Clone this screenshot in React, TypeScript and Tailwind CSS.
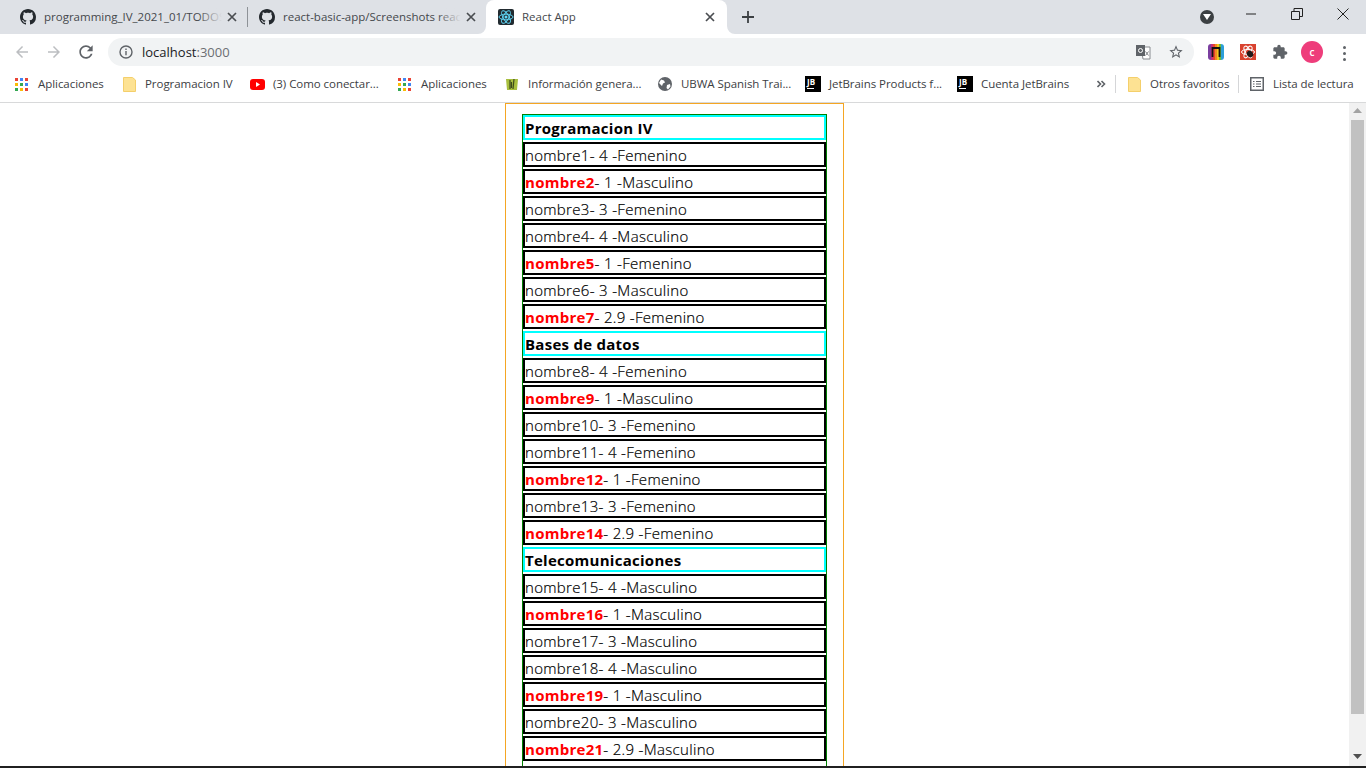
const FONT = "font-['Open_Sans',sans-serif]";

const GITHUB =
  "M8 0C3.58 0 0 3.58 0 8c0 3.54 2.29 6.53 5.47 7.59.4.07.55-.17.55-.38 0-.19-.01-.82-.01-1.49-2.01.37-2.53-.49-2.69-.94-.09-.23-.48-.94-.82-1.13-.28-.15-.68-.52-.01-.53.63-.01 1.08.58 1.23.82.72 1.21 1.87.87 2.33.66.07-.52.28-.87.51-1.07-1.78-.2-3.64-.89-3.64-3.95 0-.87.31-1.59.82-2.15-.08-.2-.36-1.02.08-2.12 0 0 .67-.21 2.2.82.64-.18 1.32-.27 2-.27.68 0 1.36.09 2 .27 1.53-1.04 2.2-.82 2.2-.82.44 1.1.16 1.92.08 2.12.51.56.82 1.27.82 2.15 0 3.07-1.87 3.75-3.65 3.95.29.25.54.73.54 1.48 0 1.07-.01 1.93-.01 2.2 0 .21.15.46.55.38A8.013 8.013 0 0016 8c0-4.42-3.58-8-8-8z";

function GithubIcon() {
  return (
    <svg width="16" height="16" viewBox="0 0 16 16" className="shrink-0">
      <path d={GITHUB} fill="#24292e" />
    </svg>
  );
}

function CloseIcon() {
  return (
    <svg width="10" height="10" viewBox="0 0 10 10" className="shrink-0">
      <path d="M1 1l8 8M9 1l-8 8" stroke="#4a4d51" strokeWidth="1.7" />
    </svg>
  );
}

function ReactIcon() {
  return (
    <svg width="16" height="16" viewBox="0 0 16 16" className="shrink-0">
      <rect width="16" height="16" rx="2" fill="#222b30" />
      <g fill="none" stroke="#61dafb" strokeWidth="0.9">
        <ellipse cx="8" cy="8" rx="7" ry="2.8" />
        <ellipse cx="8" cy="8" rx="7" ry="2.8" transform="rotate(60 8 8)" />
        <ellipse cx="8" cy="8" rx="7" ry="2.8" transform="rotate(120 8 8)" />
      </g>
      <circle cx="8" cy="8" r="1.5" fill="#61dafb" />
    </svg>
  );
}

function Tab({ title, width, active }: { title: string; width: string; active?: boolean }) {
  if (active) {
    return (
      <div className={`relative flex h-[34px] shrink-0 items-center rounded-t-lg bg-white pl-[12px] pr-[12px] ${width}`}>
        <svg width="8" height="8" viewBox="0 0 8 8" className="absolute bottom-0 left-[-8px]">
          <path d="M8 0v8H0a8 8 0 008-8z" fill="#fff" />
        </svg>
        <svg width="8" height="8" viewBox="0 0 8 8" className="absolute bottom-0 right-[-8px]">
          <path d="M0 0v8h8a8 8 0 01-8-8z" fill="#fff" />
        </svg>
        <ReactIcon />
        <span className="ml-2 flex-1 text-[11.5px] text-[#45484c]">{title}</span>
        <CloseIcon />
      </div>
    );
  }
  return (
    <div className={`flex h-[34px] shrink-0 items-center ${width}`}>
      <GithubIcon />
      <div className="relative ml-2 mr-[5px] flex-1 overflow-hidden">
        <span className="block whitespace-nowrap text-[11.5px] text-[#45484c]">{title}</span>
        <div className="absolute inset-y-0 right-0 w-6 bg-linear-to-r from-transparent to-[#dee1e6]" />
      </div>
      <CloseIcon />
    </div>
  );
}

function TabStrip() {
  return (
    <div className="flex h-[34px] shrink-0 items-center bg-[#dee1e6] pl-5">
      <div className="flex w-[227px] shrink-0 items-center pr-[10px]">
        <Tab title="programming_IV_2021_01/TODOS" width="w-[217px]" />
      </div>
      <div className="h-5 w-px shrink-0 bg-[#8e9297]" />
      <div className="ml-[11px] flex w-[227px] shrink-0 items-center">
        <Tab title="react-basic-app/Screenshots react" width="w-[217px]" />
      </div>
      <Tab title="React App" width="w-[241px]" active />
      <svg width="14" height="14" viewBox="0 0 14 14" className="ml-[14px] shrink-0">
        <path d="M7 1v12M1 7h12" stroke="#3c4043" strokeWidth="1.8" />
      </svg>
      <div className="flex-1" />
      <div className="flex h-[14px] w-[14px] shrink-0 items-center justify-center rounded-full bg-[#3c4043]">
        <svg width="8" height="6" viewBox="0 0 8 6">
          <path d="M0 0h8L4 6z" fill="#fff" />
        </svg>
      </div>
      <div className="flex shrink-0 items-start gap-[34px] self-start pl-[31px] pr-[17px] pt-[8px]">
        <svg width="12" height="12" viewBox="0 0 12 12">
          <path d="M1 6h10" stroke="#222" strokeWidth="1" />
        </svg>
        <svg width="12" height="12" viewBox="0 0 12 12">
          <path d="M.5 3.5h8v8h-8zM3 3.5V.5h8.500v8h-3" fill="none" stroke="#222" strokeWidth="1" />
        </svg>
        <svg width="12" height="12" viewBox="0 0 12 12">
          <path d="M.5.500l11 11M11.500.500l-11 11" stroke="#222" strokeWidth="1" />
        </svg>
      </div>
    </div>
  );
}

function AddressBar() {
  return (
    <div className="flex h-[32px] shrink-0 items-start bg-white pl-[13px] pt-[4px]">
      <svg width="18" height="18" viewBox="0 0 24 24" className="mt-[5px] shrink-0">
        <path d="M20 11H7.830l5.590-5.590L12 4l-8 8 8 8 1.410-1.410L7.830 13H20v-2z" fill="#bcbec1" />
      </svg>
      <svg width="18" height="18" viewBox="0 0 24 24" className="ml-[14px] mt-[5px] shrink-0 rotate-180">
        <path d="M20 11H7.830l5.590-5.590L12 4l-8 8 8 8 1.410-1.410L7.830 13H20v-2z" fill="#bcbec1" />
      </svg>
      <svg width="20" height="20" viewBox="0 0 24 24" className="ml-[13px] mt-[4px] shrink-0">
        <path
          d="M17.650 6.350C16.200 4.900 14.210 4 12 4c-4.420 0-7.990 3.580-7.990 8s3.570 8 7.990 8c3.730 0 6.840-2.550 7.730-6h-2.080c-.82 2.330-3.040 4-5.650 4-3.310 0-6-2.690-6-6s2.690-6 6-6c1.660 0 3.140.69 4.220 1.780L13 11h7V4l-2.350 2.350z"
          fill="#5f6368"
        />
      </svg>
      <div className="ml-[12px] flex h-[28px] w-[1086px] shrink-0 items-center rounded-full bg-[#f1f3f4] pl-[11px] pr-[10px]">
        <svg width="14" height="14" viewBox="0 0 14 14" className="shrink-0">
          <circle cx="7" cy="7" r="6" fill="none" stroke="#5f6368" strokeWidth="1.400" />
          <path d="M7 6v4.200M7 3.500v1.400" stroke="#5f6368" strokeWidth="1.400" />
        </svg>
        <span className="ml-[9px] pt-[1px] text-[13px] text-[#202124]">
          localhost<span className="text-[#6b6e72]">:3000</span>
        </span>
        <div className="flex-1" />
        <svg width="16" height="16" viewBox="0 0 16 16" className="shrink-0">
          <path d="M6 3h9v12H8z" fill="#fff" stroke="#888b8f" strokeWidth="1" />
          <rect x="1" y="1" width="9" height="11" fill="#5f6368" />
          <circle cx="5.500" cy="6.500" r="2" fill="none" stroke="#fff" strokeWidth="1" />
          <path d="M10.500 7.500l3 4M13.500 7.500l-3 4" stroke="#7d8084" strokeWidth="1" />
        </svg>
        <svg width="16" height="16" viewBox="0 0 24 24" className="ml-[17px] shrink-0">
          <path
            d="M22 9.240l-7.190-.62L12 2 9.190 8.630 2 9.240l5.460 4.730L5.820 21 12 17.270 18.180 21l-1.630-7.030L22 9.240zM12 15.400l-3.760 2.270 1-4.280-3.320-2.880 4.380-.38L12 6.100l1.710 4.040 4.380.38-3.320 2.880 1 4.280L12 15.400z"
            fill="#5f6368"
          />
        </svg>
      </div>
      <div className="ml-[14px] h-4 w-4 mt-[6px] shrink-0 overflow-hidden rounded-[3px]">
        <svg width="16" height="16" viewBox="0 0 16 16">
          <rect x="0" width="3" height="16" fill="#7b3fa0" />
          <rect x="3" width="2" height="16" fill="#c2307a" />
          <rect x="5" width="2" height="16" fill="#e8432e" />
          <rect x="7" width="2" height="16" fill="#f08a24" />
          <rect x="9" width="2" height="16" fill="#f6c61c" />
          <rect x="11" width="2" height="16" fill="#6cbb3c" />
          <rect x="13" width="3" height="16" fill="#2c9fd8" />
          <path d="M4.500 13V4h7v9" fill="none" stroke="#111" strokeWidth="1.800" />
        </svg>
      </div>
      <svg width="16" height="16" viewBox="0 0 16 16" className="ml-4 mt-[6px] shrink-0">
        <rect width="16" height="16" fill="#d9422f" />
        <g fill="none" stroke="#fff" strokeWidth="1">
          <ellipse cx="8" cy="8" rx="6.500" ry="2.600" />
          <ellipse cx="8" cy="8" rx="6.500" ry="2.600" transform="rotate(60 8 8)" />
          <ellipse cx="8" cy="8" rx="6.500" ry="2.600" transform="rotate(120 8 8)" />
        </g>
        <ellipse cx="10" cy="10" rx="3" ry="3.500" fill="#231a1a" transform="rotate(-35 10 10)" />
      </svg>
      <svg width="16" height="16" viewBox="0 0 24 24" className="ml-4 mt-[6px] shrink-0">
        <path
          d="M20.500 11H19V7c0-1.100-.9-2-2-2h-4V3.500C13 2.120 11.880 1 10.500 1S8 2.120 8 3.500V5H4c-1.100 0-1.990.9-1.990 2v3.800H3.500c1.490 0 2.700 1.210 2.700 2.700s-1.210 2.700-2.700 2.700H2V20c0 1.100.9 2 2 2h3.800v-1.500c0-1.490 1.210-2.700 2.700-2.700 1.490 0 2.700 1.210 2.700 2.700V22H17c1.100 0 2-.9 2-2v-4h1.500c1.380 0 2.500-1.120 2.500-2.500S21.880 11 20.500 11z"
          fill="#5f6368"
        />
      </svg>
      <div className="ml-[13px] mt-[3px] flex h-[22px] w-[22px] shrink-0 items-center justify-center rounded-full bg-[#ee3d7b] text-[10px] font-semibold text-white">
        c
      </div>
      <div className="ml-[20px] mt-[8px] flex shrink-0 flex-col gap-[3px]">
        <div className="h-[3px] w-[3px] rounded-full bg-[#5f6368]" />
        <div className="h-[3px] w-[3px] rounded-full bg-[#5f6368]" />
        <div className="h-[3px] w-[3px] rounded-full bg-[#5f6368]" />
      </div>
    </div>
  );
}

function AppsIcon() {
  const colors = ["#ea4335", "#4285f4", "#ea4335", "#fbbc05", "#34a853", "#4285f4", "#34a853", "#fbbc05", "#ea4335"];
  return (
    <div className="grid w-[13px] shrink-0 grid-cols-3 gap-[2px]">
      {colors.map((c, i) => (
        <div key={i} className="h-[3px] w-[3px]" style={{ backgroundColor: c }} />
      ))}
    </div>
  );
}

function FolderIcon() {
  return (
    <svg width="13" height="15" viewBox="0 0 13 15" className="shrink-0">
      <path d="M.5.500h9l3 2.500v11.500H.5z" fill="#fde293" stroke="#f4cf6b" strokeWidth="1" />
    </svg>
  );
}

function YoutubeIcon() {
  return (
    <svg width="15" height="11" viewBox="0 0 15 11" className="shrink-0">
      <rect width="15" height="11" rx="3" fill="#f00" />
      <path d="M6 3l4 2.500L6 8z" fill="#fff" />
    </svg>
  );
}

function LeafIcon() {
  return (
    <svg width="12" height="13" viewBox="0 0 12 13" className="shrink-0">
      <path d="M0 1h12l-1 11H1z" fill="#a8bf3f" />
      <path d="M4 2v9M8 1L7 11M5.500 4v6" stroke="#3d4a1c" strokeWidth="1.200" />
    </svg>
  );
}

function GlobeIcon() {
  return (
    <svg width="14" height="14" viewBox="0 0 14 14" className="shrink-0">
      <circle cx="7" cy="7" r="7" fill="#5f6368" />
      <path d="M3 2.500l3 1 1 2-2 1-1 2.500-3-3zM9 8l3-1 .5 2.500L10 12.500 8.500 11z" fill="#fff" />
    </svg>
  );
}

function JbIcon() {
  return (
    <div className="flex h-4 w-4 shrink-0 flex-col bg-black pl-[2px] pt-[1px]">
      <span className="text-[8px] font-bold leading-[9px] text-white">JB</span>
      <div className="mt-[2px] h-px w-[7px] bg-white" />
    </div>
  );
}

function ListIcon() {
  return (
    <svg width="14" height="14" viewBox="0 0 14 14" className="shrink-0">
      <rect x=".75" y=".75" width="12.500" height="12.500" fill="none" stroke="#5f6368" strokeWidth="1.500" />
      <path d="M3 4.500h1.500M6 4.500h5M3 7h1.500M6 7h5M3 9.500h1.500M6 9.500h5" stroke="#5f6368" strokeWidth="1.200" />
    </svg>
  );
}

function Bookmark({ icon, label, width, gap }: { icon: React.ReactNode; label: string; width: string; gap: string }) {
  return (
    <div className={`flex shrink-0 items-center whitespace-nowrap ${width}`}>
      {icon}
      <span className={`text-[11.5px] tracking-[-0.05px] text-[#3c4043] ${gap}`}>{label}</span>
    </div>
  );
}

function BookmarksBar() {
  return (
    <div className="flex h-[37px] shrink-0 items-center border-b border-[#d8d9da] bg-white pl-[15px]">
      <Bookmark icon={<AppsIcon />} label="Aplicaciones" width="w-[108px]" gap="ml-[10px]" />
      <Bookmark icon={<FolderIcon />} label="Programacion IV" width="w-[127px]" gap="ml-[9px]" />
      <Bookmark icon={<YoutubeIcon />} label="(3) Como conectar..." width="w-[148px]" gap="ml-[8px]" />
      <Bookmark icon={<AppsIcon />} label="Aplicaciones" width="w-[108px]" gap="ml-[10px]" />
      <Bookmark icon={<LeafIcon />} label="Información genera..." width="w-[152px]" gap="ml-[10px]" />
      <Bookmark icon={<GlobeIcon />} label="UBWA Spanish Trai..." width="w-[147px]" gap="ml-[9px]" />
      <Bookmark icon={<JbIcon />} label="JetBrains Products f..." width="w-[152px]" gap="ml-[8px]" />
      <Bookmark icon={<JbIcon />} label="Cuenta JetBrains" width="w-[140px]" gap="ml-[8px]" />
      <svg width="18" height="10" viewBox="0 0 18 10" className="shrink-0">
        <path d="M.5 2l3 3-3 3M4.500 2l3 3-3 3" fill="none" stroke="#5f6368" strokeWidth="1.600" />
      </svg>
      <div className="h-[18px] w-px shrink-0 bg-[#d5d6d8]" />
      <div className="ml-[12px] w-[110px] shrink-0">
        <Bookmark icon={<FolderIcon />} label="Otros favoritos" width="w-[110px]" gap="ml-[9px]" />
      </div>
      <div className="h-[18px] w-px shrink-0 bg-[#d5d6d8]" />
      <div className="ml-[11px]">
        <Bookmark icon={<ListIcon />} label="Lista de lectura" width="w-[104px]" gap="ml-[9px]" />
      </div>
    </div>
  );
}

type Student = { name: string; grade: number; sex: string };

const make = (from: number, sexes: string[]): Student[] =>
  [4, 1, 3, 4, 1, 3, 2.9].map((grade, i) => ({ name: `nombre${from + i}`, grade, sex: sexes[i] }));

const F = "Femenino";
const M = "Masculino";

const groups = [
  { title: "Programacion IV", students: make(1, [F, M, F, M, F, M, F]) },
  { title: "Bases de datos", students: make(8, [F, M, F, F, F, F, F]) },
  { title: "Telecomunicaciones", students: make(15, [M, M, M, M, M, M, M]) },
];

function Page() {
  return (
    <div className="mx-auto w-[339px] border border-b-0 border-[#f5a623] px-4 pt-[10px]">
      <div className="border border-b-0 border-[#008000] pb-10">
        {groups.map((g) => (
          <div key={g.title}>
            <div className="mb-[2px] h-[25px] whitespace-nowrap border-2 border-[#00ffff] pt-[1px] text-[15px] font-bold leading-[21px] tracking-[0.27px] text-black">
              {g.title}
            </div>
            {g.students.map((s) => (
              <div
                key={s.name}
                className="mb-[2px] h-[25px] whitespace-nowrap border-2 border-black pt-[1px] text-[15px] font-light leading-[21px] tracking-[0.32px] text-black [-webkit-text-stroke:0.2px_black]"
              >
                {s.grade < 3 ? (
                  <b className="font-bold tracking-[0.27px] text-[#ff0000] [-webkit-text-stroke:0]">{s.name}</b>
                ) : (
                  s.name
                )}
                - {s.grade} -{s.sex}
              </div>
            ))}
          </div>
        ))}
      </div>
    </div>
  );
}

function Scrollbar() {
  return (
    <div className="flex w-[17px] shrink-0 flex-col items-center bg-[#f1f1f1]">
      <svg width="9" height="5" viewBox="0 0 9 5" className="mt-[5px] shrink-0">
        <path d="M0 5h9L4.500 0z" fill="#a3a3a3" />
      </svg>
      <div className="mt-[7px] h-[594px] w-[13px] shrink-0 bg-[#c1c1c1]" />
      <svg width="9" height="5" viewBox="0 0 9 5" className="mt-[40px] shrink-0">
        <path d="M0 0h9L4.500 5z" fill="#505050" />
      </svg>
    </div>
  );
}

export default function App() {
  return (
    <div className={`flex h-screen flex-col overflow-hidden bg-white ${FONT}`}>
      <TabStrip />
      <AddressBar />
      <BookmarksBar />
      <div className="flex min-h-0 flex-1">
        <main className="min-w-0 flex-1 overflow-hidden">
          <Page />
        </main>
        <Scrollbar />
      </div>
      <div className="h-[2px] shrink-0 bg-[#202020]" />
    </div>
  );
}
